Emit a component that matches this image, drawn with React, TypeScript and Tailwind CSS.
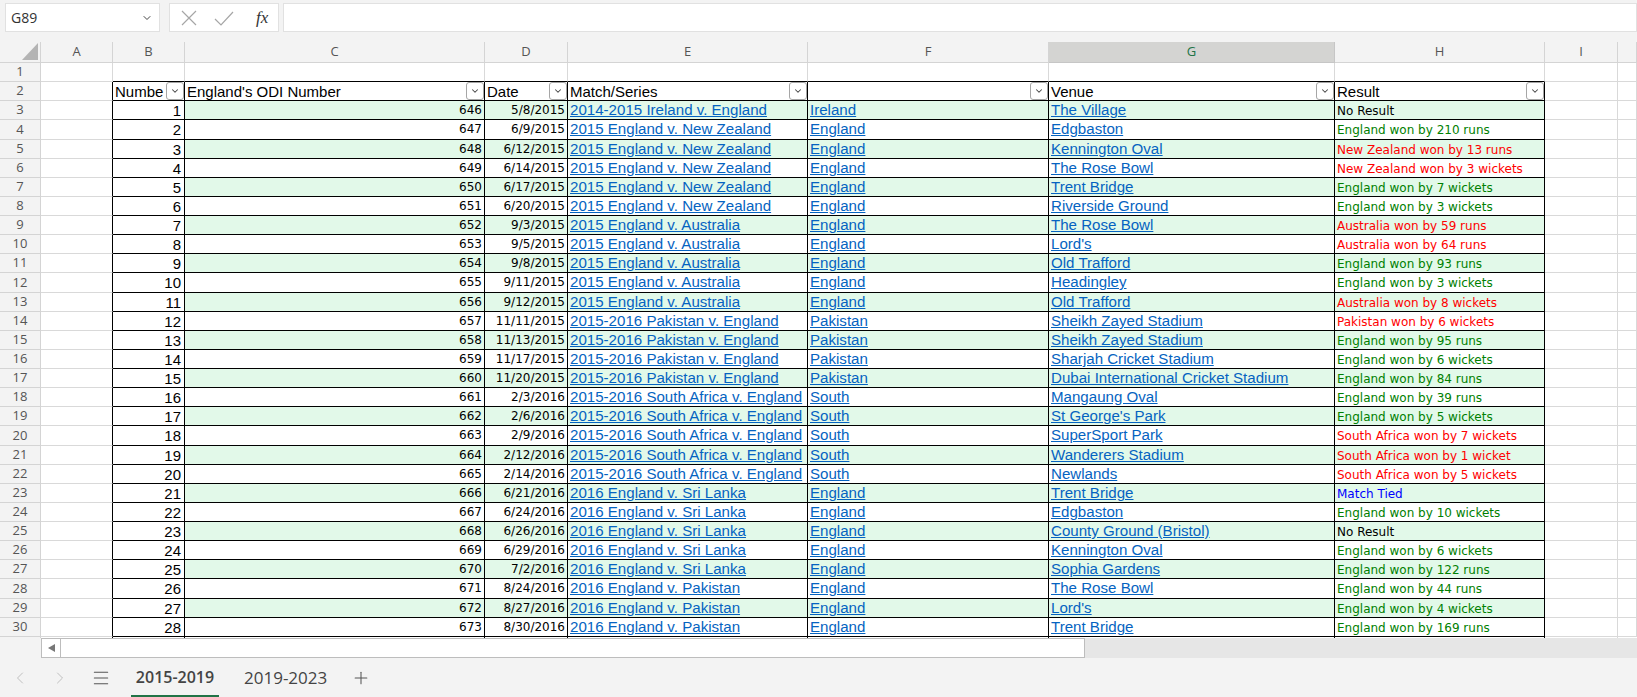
import { ChevronDown, ChevronLeft, ChevronRight, Menu, Plus } from "lucide-react";

const GRID = "grid grid-cols-[41px_72px_72px_300px_83px_240px_241px_286px_210px_73px_19px] grid-rows-[minmax(0,1fr)]";

const rows: [string, string, string, string, string, string][] = [
  ["646", "5/8/2015", "2014-2015 Ireland v. England", "Ireland", "The Village", "No Result"],
  ["647", "6/9/2015", "2015 England v. New Zealand", "England", "Edgbaston", "England won by 210 runs"],
  ["648", "6/12/2015", "2015 England v. New Zealand", "England", "Kennington Oval", "New Zealand won by 13 runs"],
  ["649", "6/14/2015", "2015 England v. New Zealand", "England", "The Rose Bowl", "New Zealand won by 3 wickets"],
  ["650", "6/17/2015", "2015 England v. New Zealand", "England", "Trent Bridge", "England won by 7 wickets"],
  ["651", "6/20/2015", "2015 England v. New Zealand", "England", "Riverside Ground", "England won by 3 wickets"],
  ["652", "9/3/2015", "2015 England v. Australia", "England", "The Rose Bowl", "Australia won by 59 runs"],
  ["653", "9/5/2015", "2015 England v. Australia", "England", "Lord's", "Australia won by 64 runs"],
  ["654", "9/8/2015", "2015 England v. Australia", "England", "Old Trafford", "England won by 93 runs"],
  ["655", "9/11/2015", "2015 England v. Australia", "England", "Headingley", "England won by 3 wickets"],
  ["656", "9/12/2015", "2015 England v. Australia", "England", "Old Trafford", "Australia won by 8 wickets"],
  ["657", "11/11/2015", "2015-2016 Pakistan v. England", "Pakistan", "Sheikh Zayed Stadium", "Pakistan won by 6 wickets"],
  ["658", "11/13/2015", "2015-2016 Pakistan v. England", "Pakistan", "Sheikh Zayed Stadium", "England won by 95 runs"],
  ["659", "11/17/2015", "2015-2016 Pakistan v. England", "Pakistan", "Sharjah Cricket Stadium", "England won by 6 wickets"],
  ["660", "11/20/2015", "2015-2016 Pakistan v. England", "Pakistan", "Dubai International Cricket Stadium", "England won by 84 runs"],
  ["661", "2/3/2016", "2015-2016 South Africa v. England", "South", "Mangaung Oval", "England won by 39 runs"],
  ["662", "2/6/2016", "2015-2016 South Africa v. England", "South", "St George's Park", "England won by 5 wickets"],
  ["663", "2/9/2016", "2015-2016 South Africa v. England", "South", "SuperSport Park", "South Africa won by 7 wickets"],
  ["664", "2/12/2016", "2015-2016 South Africa v. England", "South", "Wanderers Stadium", "South Africa won by 1 wicket"],
  ["665", "2/14/2016", "2015-2016 South Africa v. England", "South", "Newlands", "South Africa won by 5 wickets"],
  ["666", "6/21/2016", "2016 England v. Sri Lanka", "England", "Trent Bridge", "Match Tied"],
  ["667", "6/24/2016", "2016 England v. Sri Lanka", "England", "Edgbaston", "England won by 10 wickets"],
  ["668", "6/26/2016", "2016 England v. Sri Lanka", "England", "County Ground (Bristol)", "No Result"],
  ["669", "6/29/2016", "2016 England v. Sri Lanka", "England", "Kennington Oval", "England won by 6 wickets"],
  ["670", "7/2/2016", "2016 England v. Sri Lanka", "England", "Sophia Gardens", "England won by 122 runs"],
  ["671", "8/24/2016", "2016 England v. Pakistan", "England", "The Rose Bowl", "England won by 44 runs"],
  ["672", "8/27/2016", "2016 England v. Pakistan", "England", "Lord's", "England won by 4 wickets"],
  ["673", "8/30/2016", "2016 England v. Pakistan", "England", "Trent Bridge", "England won by 169 runs"],
];

function resultColor(r: string) {
  if (r.startsWith("England")) return "text-[#008000]";
  if (r === "Match Tied") return "text-[#0000ff]";
  if (r === "No Result") return "text-black";
  return "text-[#ff0000]";
}

function ColHead({ label, selected }: { label: string; selected?: boolean }) {
  return (
    <div
      className={
        selected
          ? "flex items-center justify-center border-r border-b border-[#c6c6c6] bg-[#d4d4d2] text-[#217346]"
          : "flex items-center justify-center border-r border-b border-[#d4d4d4] text-[#555]"
      }
    >
      {label}
    </div>
  );
}

function RowHead({ n }: { n: number }) {
  return (
    <div className="flex items-center justify-center overflow-hidden border-r border-b border-[#d4d4d4] bg-[#f3f3f3] font-['Open_Sans',sans-serif] text-[13px] text-[#555]">
      {n}
    </div>
  );
}

function Blank({ right, bottom }: { right?: boolean; bottom?: boolean }) {
  return (
    <div
      className={`border-r border-b bg-white ${right ? "border-r-black" : "border-r-[#d9d9d9]"} ${
        bottom ? "border-b-black" : "border-b-[#d9d9d9]"
      }`}
    />
  );
}

function HeadCell({ label }: { label: string }) {
  return (
    <div className="relative overflow-hidden whitespace-nowrap border-r border-b border-black bg-white pl-[2px] text-[15px] leading-[19px] text-black">
      {label}
      <span className="absolute top-0 right-0 flex h-[18px] w-[18px] items-center justify-center rounded-[3px] border border-[#a6a6a6] bg-white">
        <ChevronDown size={10} strokeWidth={2.5} className="text-[#444]" />
      </span>
    </div>
  );
}

function LinkCell({ text, green }: { text: string; green: boolean }) {
  return (
    <div
      className={`overflow-hidden whitespace-nowrap border-r border-b border-black pl-[2px] text-[15.1px] leading-[17px] text-[#0563c1] underline ${
        green ? "bg-[#e2f9e9]" : "bg-white"
      }`}
    >
      {text}
    </div>
  );
}

function DataRow({ i, r }: { i: number; r: (typeof rows)[number] }) {
  const green = i % 2 === 0;
  const bg = green ? "bg-[#e2f9e9]" : "bg-white";
  const small = "overflow-hidden font-['DejaVu_Sans',sans-serif] text-[12px]";
  const n = i + 3;
  return (
    <div className={`${GRID} ${n % 8 === 4 ? "h-[20px]" : "h-[19px]"}`}>
      <RowHead n={n} />
      <Blank right />
      <div className="overflow-hidden border-r border-b border-black bg-white pr-[3px] text-right text-[15px] leading-[19px] text-black">
        {i + 1}
      </div>
      <div className={`border-r border-b border-black pr-[2px] text-right leading-[19px] text-black ${small} ${bg}`}>{r[0]}</div>
      <div className={`border-r border-b border-black pr-[2px] text-right leading-[19px] text-black ${small} ${bg}`}>{r[1]}</div>
      <LinkCell text={r[2]} green={green} />
      <LinkCell text={r[3]} green={green} />
      <LinkCell text={r[4]} green={green} />
      <div className={`whitespace-nowrap border-r border-b border-black pl-[2px] leading-[21px] ${small} ${bg} ${resultColor(r[5])}`}>{r[5]}</div>
      <Blank />
      <Blank />
    </div>
  );
}

export default function App() {
  return (
    <div className="flex h-[697px] w-[1637px] flex-col overflow-hidden bg-[#f3f3f3] font-['Liberation_Sans',Arial,sans-serif]">
      {/* formula bar */}
      <div className="flex h-[42px] shrink-0 pt-[3px] pb-[10px] pl-[5px]">
        <div className="flex w-[155px] items-center justify-between border border-[#e1e1e1] bg-white pr-[6px] pl-[5px] font-['Open_Sans',sans-serif] text-[14px] text-[#333]">
          <span>G89</span>
          <ChevronDown size={12} strokeWidth={2} className="text-[#444]" />
        </div>
        <div className="ml-[9px] flex w-[110px] items-center border border-[#e1e1e1] bg-white pl-[10px]">
          <svg width="18" height="18" viewBox="0 0 18 18" fill="none" stroke="#a6a6a6" strokeWidth="1.2">
            <path d="M2 2L16 16M16 2L2 16" />
          </svg>
          <svg className="ml-[15px]" width="22" height="18" viewBox="0 0 22 18" fill="none" stroke="#a6a6a6" strokeWidth="1.2">
            <path d="M2 10L8 16L20 3" />
          </svg>
          <span className="ml-[21px] font-['Liberation_Serif',serif] text-[17px] italic leading-none text-[#333]">fx</span>
        </div>
        <div className="ml-[4px] flex-1 border border-[#e1e1e1] bg-white" />
      </div>

      {/* column headers */}
      <div className={`${GRID} h-[21px] shrink-0 font-['Open_Sans',sans-serif] text-[13px]`}>
        <div className="flex items-end justify-end border-r border-b border-[#d4d4d4] pr-[2px] pb-[2px]">
          <svg width="16" height="17" viewBox="0 0 16 17">
            <path d="M16 0V17H0Z" fill="#b4b4b4" />
          </svg>
        </div>
        <ColHead label="A" />
        <ColHead label="B" />
        <ColHead label="C" />
        <ColHead label="D" />
        <ColHead label="E" />
        <ColHead label="F" />
        <ColHead label="G" selected />
        <ColHead label="H" />
        <ColHead label="I" />
        <ColHead label="" />
      </div>

      {/* row 1 */}
      <div className={`${GRID} h-[19px] shrink-0`}>
        <RowHead n={1} />
        <Blank />
        <Blank bottom />
        <Blank bottom />
        <Blank bottom />
        <Blank bottom />
        <Blank bottom />
        <Blank bottom />
        <Blank bottom />
        <Blank />
        <Blank />
      </div>

      {/* table head */}
      <div className={`${GRID} h-[19px] shrink-0`}>
        <RowHead n={2} />
        <Blank right />
        <HeadCell label="Numbe" />
        <HeadCell label="England's ODI Number" />
        <HeadCell label="Date" />
        <HeadCell label="Match/Series" />
        <HeadCell label="" />
        <HeadCell label="Venue" />
        <HeadCell label="Result" />
        <Blank />
        <Blank />
      </div>

      {rows.map((r, i) => (
        <DataRow key={i} i={i} r={r} />
      ))}

      {/* top sliver of row 31 */}
      <div className={`${GRID} h-[1px] shrink-0 overflow-hidden`}>
        <div className="border-r border-[#d4d4d4]" />
        <div className="border-r border-black bg-white" />
        <div className="border-r border-black bg-white" />
        <div className="border-r border-black bg-white" />
        <div className="border-r border-black bg-white" />
        <div className="border-r border-black bg-white" />
        <div className="border-r border-black bg-white" />
        <div className="border-r border-black bg-white" />
        <div className="border-r border-black bg-white" />
        <div className="border-r border-[#d9d9d9] bg-white" />
        <div className="bg-white" />
      </div>

      {/* horizontal scrollbar */}
      <div className="flex h-[20px] shrink-0">
        <div className="w-[41px]" />
        <div className="flex flex-1 bg-[#e6e6e6]">
          <div className="flex w-[20px] items-center justify-center border border-[#bdbdbd] bg-white">
            <span className="h-0 w-0 border-y-[4px] border-r-[7px] border-y-transparent border-r-[#777]" />
          </div>
          <div className="w-[1024px] border-y border-r border-[#bdbdbd] bg-white" />
        </div>
      </div>

      {/* sheet tabs */}
      <div className="flex flex-1 items-center font-['Open_Sans',sans-serif] text-[#444]">
        <ChevronLeft size={20} strokeWidth={1} className="ml-[10px] text-[#b5b5b5]" />
        <ChevronRight size={20} strokeWidth={1} className="ml-[20px] text-[#b5b5b5]" />
        <Menu size={20} strokeWidth={1.25} className="ml-[21px] text-[#555]" />
        <div className="ml-[20px] flex h-full w-[88px] items-center justify-center border-b-2 border-[#217346] text-[16px] font-semibold">
          2015-2019
        </div>
        <div className="ml-[25px] text-[17px]">2019-2023</div>
        <Plus size={20} strokeWidth={1.25} className="ml-[24px] text-[#555]" />
      </div>
    </div>
  );
}
